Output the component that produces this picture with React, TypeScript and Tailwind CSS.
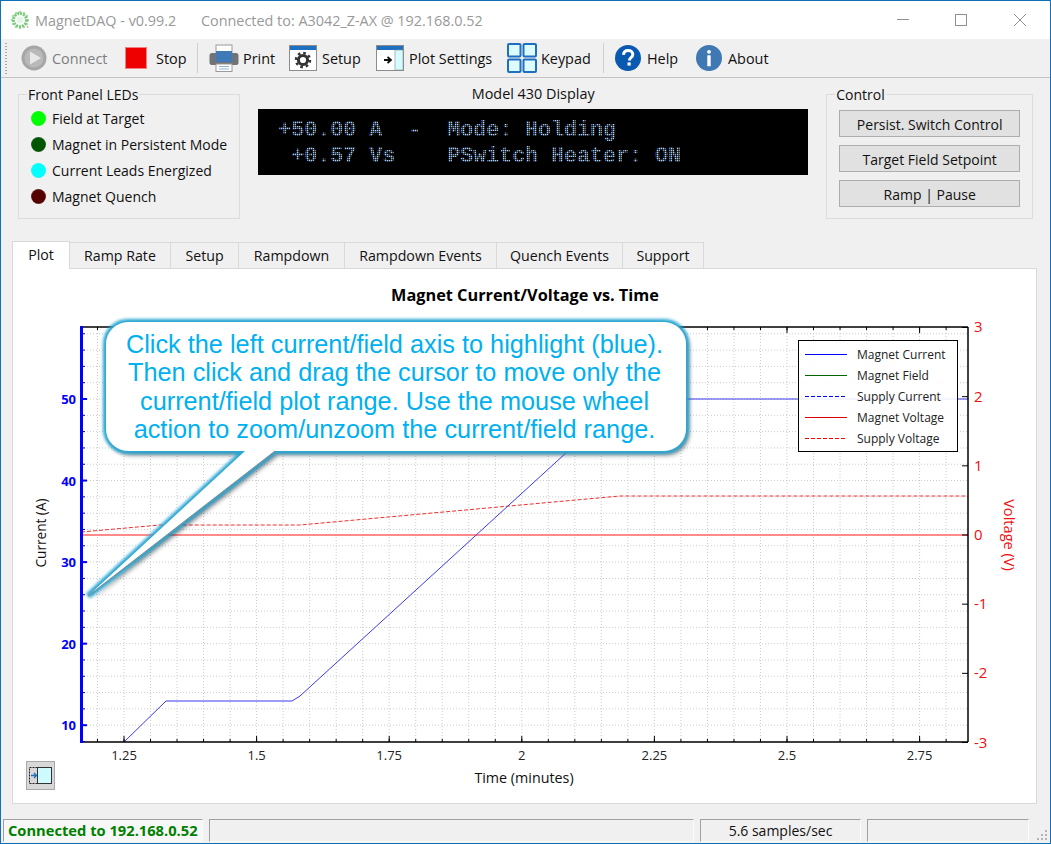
import type { ReactNode } from "react"

const leds = [
  { label: "Field at Target", cls: "bg-[radial-gradient(circle,#00ff00_62%,#7fd87f_100%)]" },
  { label: "Magnet in Persistent Mode", cls: "bg-[radial-gradient(circle,#005500_58%,#8a8f8a_100%)]" },
  { label: "Current Leads Energized", cls: "bg-[radial-gradient(circle,#00ffff_62%,#8fd8d8_100%)]" },
  { label: "Magnet Quench", cls: "bg-[radial-gradient(circle,#550000_58%,#8f8a8a_100%)]" },
]

const tabs = [
  { label: "Plot", w: "w-[58px]" },
  { label: "Ramp Rate", w: "w-[101px]" },
  { label: "Setup", w: "w-[68px]" },
  { label: "Rampdown", w: "w-[106px]" },
  { label: "Rampdown Events", w: "w-[152px]" },
  { label: "Quench Events", w: "w-[126px]" },
  { label: "Support", w: "w-[81px]" },
]

const PX = (t: number) => 124 + ((t - 1.25) / 0.25) * 132.6
const PY = (a: number) => 399 + ((50 - a) / 10) * 81.55
const VY = (v: number) => 535 - v * 69.17

const L = 81
const R = 968
const T = 327
const B = 742

function range(from: number, to: number, step: number) {
  const out: number[] = []
  for (let v = from; v <= to + 1e-6; v += step) out.push(v)
  return out
}

function Chart() {
  const xMinor = range(1.2, 2.8, 0.05).map(PX).filter((x) => x > L && x < R)
  const xMajor = [1.25, 1.5, 1.75, 2, 2.25, 2.5, 2.75]
  const yMinor = range(8, 58, 2).map(PY).filter((y) => y > T && y < B)
  const yMajor = [10, 20, 30, 40, 50]
  const vMinor = range(-3, 3, 0.2).map(VY)
  const vMajor = [-3, -2, -1, 0, 1, 2, 3]

  return (
    <svg viewBox="13 269 1023 534" className="block w-[1023px] h-[534px]" fontFamily='"Open Sans", sans-serif'>
      <text x="525" y="301" textAnchor="middle" fontSize="16.3" fontWeight="700" fill="#000">Magnet Current/Voltage vs. Time</text>

      {/* grid */}
      {xMinor.map((x) => (
        <line key={x} x1={x} x2={x} y1={T} y2={B} stroke="#cccccc" strokeDasharray="1 2" />
      ))}
      {yMinor.map((y) => (
        <line key={y} x1={L} x2={R} y1={y} y2={y} stroke="#cccccc" strokeDasharray="1 2" />
      ))}

      {/* traces */}
      <line x1={L} x2={R} y1="535" y2="535" stroke="#ff8a8a" strokeWidth="2" />
      <polyline points="81,532 160,525 300,525 620,496 968,496" fill="none" stroke="#f03030" strokeDasharray="4 2" />
      <polyline points="124,742 166,701 292,701 300,696 625,399 968,399" fill="none" stroke="#3a3af0" />

      {/* frame */}
      <line x1={L} x2={R} y1={T} y2={T} stroke="#000" strokeWidth="1.5" />
      <line x1={L} x2={R} y1={B} y2={B} stroke="#000" strokeWidth="1.5" />
      <line x1={R} x2={R} y1={T} y2={B} stroke="#000" strokeWidth="1.5" />
      <rect x="80" y={T - 1} width="3" height={B - T + 2} fill="#0000ff" />

      {/* x ticks */}
      {xMinor.map((x) => (
        <g key={x}>
          <line x1={x} x2={x} y1={T} y2={T + 3} stroke="#000" />
          <line x1={x} x2={x} y1={B} y2={B - 3} stroke="#000" />
        </g>
      ))}
      {xMajor.map((t) => (
        <g key={t}>
          <line x1={PX(t)} x2={PX(t)} y1={T} y2={T + 6} stroke="#000" />
          <line x1={PX(t)} x2={PX(t)} y1={B} y2={B - 6} stroke="#000" />
          <text x={PX(t)} y="760" textAnchor="middle" fontSize="13" fill="#222">{t}</text>
        </g>
      ))}

      {/* current axis */}
      {yMinor.map((y) => (
        <line key={y} x1="83" x2="85" y1={y} y2={y} stroke="#000080" />
      ))}
      {yMajor.map((a) => (
        <g key={a}>
          <line x1="83" x2="87" y1={PY(a)} y2={PY(a)} stroke="#0000ff" strokeWidth="2" />
          <text x="76" y={PY(a) + 5} textAnchor="end" fontSize="13" fontWeight="700" fill="#0000ff">{a}</text>
        </g>
      ))}
      <text transform="translate(46 533) rotate(-90)" textAnchor="middle" fontSize="13.6" fill="#111">Current (A)</text>

      {/* voltage axis */}
      {vMinor.map((v) => (
        <line key={v} x1={R} x2={R - 3} y1={VY(v)} y2={VY(v)} stroke="#000" />
      ))}
      {vMajor.map((v) => (
        <g key={v}>
          <line x1={R} x2={R - 6} y1={VY(v)} y2={VY(v)} stroke="#000" />
          <text x="974" y={VY(v) + 5} fontSize="15" fill="#f01010">{v}</text>
        </g>
      ))}
      <text transform="translate(1004 535) rotate(90)" textAnchor="middle" fontSize="14.6" fill="#f01010">Voltage (V)</text>

      <text x="524" y="783" textAnchor="middle" fontSize="14.3" fill="#111">Time (minutes)</text>

      {/* legend */}
      <rect x="798.5" y="340.5" width="159" height="111" fill="#fff" fillOpacity="0.9" stroke="#000" />
      {[
        { label: "Magnet Current", y: 354, stroke: "#0000ff", dash: "" },
        { label: "Magnet Field", y: 375, stroke: "#006400", dash: "" },
        { label: "Supply Current", y: 396, stroke: "#0000ff", dash: "4 2" },
        { label: "Magnet Voltage", y: 417, stroke: "#e00000", dash: "" },
        { label: "Supply Voltage", y: 438, stroke: "#ff0000", dash: "4 2" },
      ].map((row) => (
        <g key={row.label}>
          <line x1="805" x2="847" y1={row.y + 0.5} y2={row.y + 0.5} stroke={row.stroke} strokeDasharray={row.dash} />
          <text x="857" y={row.y + 5} fontSize="12" fill="#222">{row.label}</text>
        </g>
      ))}
    </svg>
  )
}

const calloutPath =
  "M128 322 H664 A22 22 0 0 1 686 344 V429 A22 22 0 0 1 664 451 H275 L88 596 L245 451 H128 A22 22 0 0 1 106 429 V344 A22 22 0 0 1 128 322 Z"

// Tooltip bubble that sits over the chart
function Callout() {
  return (
    <div className="absolute left-[59px] top-[299px] w-[660px] h-[320px]">
      <svg viewBox="60 300 660 320" className="absolute inset-0 w-[660px] h-[320px]">
        <defs>
          <filter id="bubbleShadow" x="-10%" y="-10%" width="120%" height="120%">
            <feGaussianBlur stdDeviation="2.5" />
          </filter>
          <filter id="bubbleGlow" x="-10%" y="-10%" width="120%" height="120%">
            <feGaussianBlur stdDeviation="1.8" />
          </filter>
        </defs>
        <path d={calloutPath} transform="translate(3 4)" fill="#000" opacity="0.5" filter="url(#bubbleShadow)" />
        <path d={calloutPath} fill="#fff" stroke="#2ba6d2" strokeWidth="6" filter="url(#bubbleGlow)" />
        <path d={calloutPath} fill="#fff" />
        <line x1="275" y1="451" x2="88" y2="596" stroke="#8a8a8a" />
      </svg>
      <div className="absolute left-[44px] top-[30px] w-[581px] whitespace-nowrap text-center font-['Liberation_Sans',sans-serif] text-[25.3px] leading-[28.4px] text-[#00b0f0]">
        Click the left current/field axis to highlight (blue).
        <br />
        Then click and drag the cursor to move only the
        <br />
        current/field plot range. Use the mouse wheel
        <br />
        action to zoom/unzoom the current/field range.
      </div>
    </div>
  )
}

function ToolItem({ icon, label, w, muted }: { icon: ReactNode; label: string; w: string; muted?: boolean }) {
  return (
    <div className={`flex items-center h-full shrink-0 ${w}`}>
      {icon}
      <span className={muted ? "text-[#7d7d7d]" : "text-[#111]"}>{label}</span>
    </div>
  )
}

function WindowIcon({ children }: { children: ReactNode }) {
  return (
    <svg viewBox="0 0 28 26" className="w-[28px] h-[26px] shrink-0">
      <rect x="0.5" y="0.5" width="27" height="25" fill="#fff" stroke="#8c8c8c" />
      <rect x="1" y="1" width="26" height="4" fill="#1f6fc0" />
      {children}
    </svg>
  )
}

function Separator() {
  return <div className="w-px h-[30px] bg-[#cfcfcf] shrink-0" />
}

function GroupBox({ title, className, children }: { title: string; className: string; children: ReactNode }) {
  return (
    <fieldset className={`border border-[#dcdcdc] ${className}`}>
      <legend className="ml-[-4px] px-px leading-[19px]">{title}</legend>
      {children}
    </fieldset>
  )
}

function Cell({ className, children }: { className: string; children?: ReactNode }) {
  return (
    <div className={`h-[23px] border-t border-l border-t-[#a0a0a0] border-l-[#a0a0a0] border-r border-b border-r-[#fbfbfb] border-b-[#fbfbfb] flex items-center shrink-0 ${className}`}>
      {children}
    </div>
  )
}

export default function App() {
  return (
    <div className="relative w-[1051px] h-[844px] overflow-hidden flex flex-col bg-[#f0f0f0] border border-[#1070b8] font-['Open_Sans',sans-serif] text-[14px] leading-[19px] text-[#111]">
      {/* Title bar */}
      <div className="h-[38px] shrink-0 bg-white flex items-center relative text-[#999999] text-[14.4px]">
        <svg viewBox="0 0 20 20" className="ml-[9px] w-[20px] h-[20px] shrink-0">
          {range(0, 345, 30).map((a) => (
            <line key={a} x1="10" y1="3.5" x2="10" y2="0.8" transform={`rotate(${a} 10 10)`} stroke="#a8dca8" strokeWidth="2" />
          ))}
          <circle cx="10" cy="10" r="6.5" fill="none" stroke="#7cc87c" strokeWidth="3" strokeDasharray="2 1" />
          <circle cx="10" cy="10" r="3.5" fill="#e4f6e4" />
          <circle cx="17.5" cy="17" r="0.8" fill="#e07070" />
        </svg>
        <span className="ml-[5px] w-[166px] shrink-0">MagnetDAQ - v0.99.2</span>
        <span>Connected to: A3042_Z-AX @ 192.168.0.52</span>
        <div className="ml-auto flex items-center">
          <svg viewBox="0 0 130 14" className="mr-[23px] w-[130px] h-[14px]" fill="none" stroke="#8f8f8f">
            <line x1="0" x2="12" y1="6.5" y2="6.5" />
            <rect x="58.5" y="1.5" width="11" height="11" />
            <path d="M117 1 L129 13 M129 1 L117 13" />
          </svg>
        </div>
      </div>

      {/* Toolbar */}
      <div className="h-[39px] shrink-0 flex items-center border-b border-[#c4c4c4] pl-[4px] text-[14.4px]">
        <div className="w-[2px] h-[31px] mr-[14px] bg-[repeating-linear-gradient(#a8a8a8_0_1px,transparent_1px_3px)] shrink-0" />
        <ToolItem
          muted
          w="w-[104px]"
          label="Connect"
          icon={
            <svg viewBox="0 0 26 26" className="w-[26px] h-[26px] mr-[5px] shrink-0">
              <circle cx="13" cy="13" r="12.5" fill="#a6a6a6" />
              <circle cx="13" cy="13" r="9.5" fill="#b9b9b9" />
              <path d="M9 6.5 L20 13 L9 19.5 Z" fill="#e8e8e8" />
            </svg>
          }
        />
        <ToolItem
          w="w-[72px]"
          label="Stop"
          icon={<div className="w-[22px] h-[22px] mr-[9px] bg-[#ee0000] border border-[#f08080] shrink-0" />}
        />
        <Separator />
        <ToolItem
          w="w-[80px] ml-[11px]"
          label="Print"
          icon={
            <svg viewBox="0 0 30 28" className="w-[30px] h-[28px] mr-[4px] shrink-0">
              <rect x="7" y="1" width="16" height="8" fill="#fff" stroke="#9a9a9a" />
              <rect x="0.5" y="9" width="29" height="12" rx="2.5" fill="#6f7377" />
              <rect x="7" y="7" width="16" height="11" fill="#3f79b8" />
              <rect x="7" y="20" width="16" height="7.5" fill="#fff" stroke="#9a9a9a" />
              <rect x="10" y="22" width="10" height="1" fill="#8fb2d8" />
              <rect x="10" y="24.5" width="10" height="1" fill="#8fb2d8" />
            </svg>
          }
        />
        <ToolItem
          w="w-[87px]"
          label="Setup"
          icon={
            <span className="mr-[5px] flex">
              <WindowIcon>
                <circle cx="14" cy="15" r="4.6" fill="none" stroke="#333" strokeWidth="3" />
                <circle cx="14" cy="15" r="7" fill="none" stroke="#333" strokeWidth="2.5" strokeDasharray="2.6 2.9" />
              </WindowIcon>
            </span>
          }
        />
        <ToolItem
          w="w-[131px]"
          label="Plot Settings"
          icon={
            <span className="mr-[5px] flex">
              <WindowIcon>
                <rect x="19" y="5" width="8" height="20" fill="#d4fbff" stroke="#8c8c8c" strokeWidth="0.6" />
                <path d="M8 15 H14 M11.5 12 L15 15 L11.5 18" fill="none" stroke="#111" strokeWidth="1.8" />
              </WindowIcon>
            </span>
          }
        />
        <ToolItem
          w="w-[96px]"
          label="Keypad"
          icon={
            <svg viewBox="0 0 30 30" className="w-[30px] h-[30px] mr-[4px] shrink-0" fill="#dcfcff" stroke="#1f6fc0" strokeWidth="2">
              <rect x="1" y="1" width="12.5" height="12.5" rx="1" />
              <rect x="16.5" y="1" width="12.5" height="12.5" rx="1" />
              <rect x="1" y="16.5" width="12.5" height="12.5" rx="1" />
              <rect x="16.5" y="16.5" width="12.5" height="12.5" rx="1" />
            </svg>
          }
        />
        <Separator />
        <ToolItem
          w="w-[81px] ml-[11px]"
          label="Help"
          icon={
            <svg viewBox="0 0 26 26" className="w-[26px] h-[26px] mr-[6px] shrink-0">
              <circle cx="13" cy="13" r="13" fill="#0a59b0" />
              <path d="M8.5 9.8 C8.7 7 10.6 5.6 13.2 5.6 C16 5.6 17.8 7.2 17.8 9.4 C17.8 12.4 14.4 12.6 14.4 15.4" fill="none" stroke="#fff" strokeWidth="3" />
              <rect x="12.5" y="17.4" width="3.2" height="3.2" fill="#fff" />
            </svg>
          }
        />
        <ToolItem
          w="w-[90px]"
          label="About"
          icon={
            <svg viewBox="0 0 26 26" className="w-[26px] h-[26px] mr-[6px] shrink-0">
              <circle cx="13" cy="13" r="13" fill="#3f78b3" />
              <circle cx="13" cy="6.8" r="1.9" fill="#fff" />
              <rect x="11.3" y="10.3" width="3.4" height="11" rx="0.6" fill="#fff" />
            </svg>
          }
        />
      </div>

      {/* Top panels */}
      <div className="h-[163px] shrink-0 flex items-start relative">
        <GroupBox title="Front Panel LEDs" className="ml-[17px] mt-[7px] w-[222px] h-[134px] px-[12px]">
          <div className="flex flex-col gap-[7px] pt-[5px]">
            {leds.map((led) => (
              <div key={led.label} className="flex items-center h-[19px] whitespace-nowrap">
                <div className={`w-[15px] h-[15px] rounded-full mr-[6px] shrink-0 ${led.cls}`} />
                {led.label}
              </div>
            ))}
          </div>
        </GroupBox>

        <div className="ml-[18px] mt-[6px] w-[550px] shrink-0">
          <div className="text-center h-[25px] text-[14.4px]">Model 430 Display</div>
          <div className="relative h-[66px] bg-black pl-[20px] pt-[9px] font-['Liberation_Mono',monospace] font-bold text-[21.67px] leading-[26px] text-[#a8d0ff] whitespace-pre overflow-hidden">
            <div>+50.00 A  -  Mode: Holding</div>
            <div> +0.57 Vs    PSwitch Heater: ON</div>
            <div className="absolute inset-0 bg-[linear-gradient(rgba(0,0,0,.62)_1px,transparent_1px),linear-gradient(90deg,rgba(0,0,0,.62)_1px,transparent_1px)] bg-[size:2px_2px]" />
          </div>
        </div>

        <GroupBox title="Control" className="ml-[18px] mt-[7px] w-[207px] h-[134px] px-[12px]">
          <div className="flex flex-col gap-[8px] pt-[6px]">
            {["Persist. Switch Control", "Target Field Setpoint", "Ramp | Pause"].map((b) => (
              <button key={b} className="h-[27px] w-[181px] pt-[1px] bg-[#e1e1e1] border border-[#adadad] text-center">
                {b}
              </button>
            ))}
          </div>
        </GroupBox>
      </div>

      {/* Tabs */}
      <div className="ml-[11px] h-[27px] shrink-0 flex items-end relative z-10 text-[14.2px]">
        {tabs.map((tab, i) =>
          i === 0 ? (
            <div key={tab.label} className={`${tab.w} h-[28px] -mb-px bg-white border border-b-0 border-[#d9d9d9] flex items-center justify-center pb-[3px] shrink-0`}>
              {tab.label}
            </div>
          ) : (
            <div key={tab.label} className={`${tab.w} h-[26px] bg-[#f0f0f0] border-t border-r border-[#d9d9d9] flex items-center justify-center pb-[1px] shrink-0`}>
              {tab.label}
            </div>
          ),
        )}
      </div>

      {/* Plot pane */}
      <div className="relative ml-[11px] w-[1025px] h-[536px] shrink-0 bg-white border border-[#d9d9d9]">
        <Chart />
        <button className="absolute left-[13px] top-[492px] w-[29px] h-[29px] bg-[#d8d8d8] border border-[#a8a8a8] flex items-center justify-center">
          <svg viewBox="0 0 24 18" className="w-[24px] h-[18px]">
            <rect x="0.5" y="0.5" width="8" height="16" fill="none" stroke="#222" strokeDasharray="2 1" />
            <rect x="8.5" y="0.5" width="14" height="16" fill="#cdfbff" stroke="#333" />
            <path d="M2 8.5 H7 M5 6 L7.5 8.5 L5 11" fill="none" stroke="#1f6fc0" strokeWidth="1.4" />
          </svg>
        </button>
      </div>

      {/* Status bar */}
      <div className="mt-[14px] ml-[2px] h-[24px] flex items-center gap-[6px]">
        <Cell className="w-[200px] pl-[4px] font-bold text-[14.7px] text-[#008000] bg-[#f7f7f7] whitespace-nowrap">Connected to 192.168.0.52</Cell>
        <Cell className="w-[485px]" />
        <Cell className="w-[161px] justify-center">5.6 samples/sec</Cell>
        <Cell className="w-[162px]" />
      </div>

      <svg viewBox="0 0 12 12" className="absolute right-[1px] bottom-[1px] w-[12px] h-[12px]" fill="#b4b4b4">
        <rect x="8" y="0" width="2" height="2" />
        <rect x="4" y="4" width="2" height="2" />
        <rect x="8" y="4" width="2" height="2" />
        <rect x="0" y="8" width="2" height="2" />
        <rect x="4" y="8" width="2" height="2" />
        <rect x="8" y="8" width="2" height="2" />
      </svg>

      <Callout />
    </div>
  )
}
